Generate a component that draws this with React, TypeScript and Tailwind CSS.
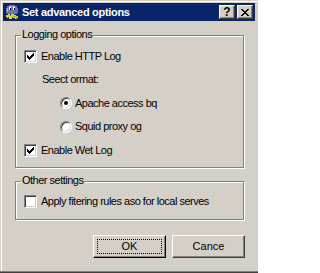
import React from "react"

function CheckMark() {
  return (
    <svg width="7" height="7" viewBox="0 0 7 7" shapeRendering="crispEdges">
      <path
        d="M0 2h1v3H0zM1 3h1v3H1zM2 4h1v3H2zM3 3h1v3H3zM4 2h1v3H4zM5 1h1v3H5zM6 0h1v3H6z"
        fill="#000"
      />
    </svg>
  )
}

function Checkbox({ checked }: { checked?: boolean }) {
  return (
    <span className="flex h-[13px] w-[13px] shrink-0 items-center justify-center border border-t-[#808080] border-l-[#808080] border-r-white border-b-white bg-white shadow-[inset_1px_1px_0_#404040,inset_-1px_-1px_0_#d4d0c8]">
      {checked && <CheckMark />}
    </span>
  )
}

function Radio({ checked }: { checked?: boolean }) {
  return (
    <span className="flex h-[12px] w-[12px] shrink-0 items-center justify-center rounded-full border border-t-[#808080] border-l-[#808080] border-r-white border-b-white bg-white shadow-[inset_1px_1px_0_#404040,inset_-1px_-1px_0_#d4d0c8]">
      {checked && <span className="h-[4px] w-[4px] rounded-full bg-black" />}
    </span>
  )
}

function AppIcon() {
  return (
    <svg width="16" height="16" viewBox="0 0 16 16" shapeRendering="crispEdges">
      {/* body */}
      <path d="M5 1h6v1h2v2h1v5h-1v1H3V9H2V4h1V2h2z" fill="#7070b0" />
      <path d="M5 2h6v1H5zM3 4h1v4H3z" fill="#a8a8e0" />
      {/* eyes */}
      <path d="M5 3h2v3H5zM9 3h2v3H9z" fill="#fff" />
      <path d="M6 4h1v2H6zM10 4h1v2h-1z" fill="#000020" />
      {/* yellow bits */}
      <path d="M4 10h2v1h1v-1h3v1h2v1h2v2h-1v1h-2v-1H8v1H5v-1H3v-1H2v-2h2z" fill="#e0d830" />
      <path d="M6 11h1v1H6zM10 12h1v1h-1zM4 13h1v1H4zM8 13h1v1H8zM12 13h1v1h-1z" fill="#707000" />
    </svg>
  )
}

function CloseGlyph() {
  return (
    <svg width="8" height="7" viewBox="0 0 8 7" shapeRendering="crispEdges">
      <path
        d="M0 0h2v1H0zM6 0h2v1H6zM1 1h2v1H1zM5 1h2v1H5zM2 2h4v1H2zM3 3h2v1H3zM2 4h4v1H2zM1 5h2v1H1zM5 5h2v1H5zM0 6h2v1H0zM6 6h2v1H6z"
        fill="#000"
      />
    </svg>
  )
}

function CaptionButton({ children }: { children: React.ReactNode }) {
  return (
    <span className="flex h-[14px] w-[16px] items-center justify-center border border-t-white border-l-white border-r-[#404040] border-b-[#404040] bg-[#d4d0c8] shadow-[inset_-1px_-1px_0_#808080]">
      {children}
    </span>
  )
}

export default function App() {
  return (
    <div className="flex h-[273px] w-[258px] flex-col bg-[#d4d0c8] font-['Liberation_Sans',Arial,sans-serif] text-[11px] leading-[13px] tracking-[-0.5px] text-black shadow-[inset_0_-1px_0_#404040,inset_0_-2px_0_#808080,inset_1px_1px_0_#d4d0c8,inset_2px_2px_0_#fff]">
      {/* title bar */}
      <div className="mx-[3px] mt-[3px] flex h-[18px] items-center bg-[#0a246a] pl-[1px] pr-[2px]">
        <AppIcon />
        <span className="ml-[2px] font-bold tracking-[-0.3px] text-white">Set advanced options</span>
        <div className="ml-auto flex gap-[2px]">
          <CaptionButton>
            <span className="text-[12px] font-bold leading-none tracking-normal">?</span>
          </CaptionButton>
          <CaptionButton>
            <CloseGlyph />
          </CaptionButton>
        </div>
      </div>

      <div className="flex flex-col pl-[15px] pr-[14px]">
        {/* Logging options */}
        <div className="relative mt-[14px] h-[133px] border border-[#808080] pt-[8px] shadow-[inset_1px_1px_0_#fff,1px_1px_0_#fff]">
          <span className="absolute -top-[8px] left-[5px] bg-[#d4d0c8] px-[1px]">Logging options</span>
          <div className="flex h-[24px] items-center gap-[4px] pl-[8px]">
            <Checkbox checked />
            <span>Enable HTTP Log</span>
          </div>
          <div className="flex h-[23px] items-center pl-[26px]">Seect ormat:</div>
          <div className="flex h-[24px] items-center gap-[3px] pl-[44px]">
            <Radio checked />
            <span>Apache access bq</span>
          </div>
          <div className="flex h-[23px] items-center gap-[3px] pl-[44px]">
            <Radio />
            <span>Squid proxy og</span>
          </div>
          <div className="flex h-[24px] items-center gap-[4px] pl-[8px]">
            <Checkbox checked />
            <span>Enable Wet Log</span>
          </div>
        </div>

        {/* Other settings */}
        <div className="relative mt-[13px] h-[39px] border border-[#808080] pt-[8px] shadow-[inset_1px_1px_0_#fff,1px_1px_0_#fff]">
          <span className="absolute -top-[8px] left-[5px] bg-[#d4d0c8] px-[1px]">Other settings</span>
          <div className="flex h-[23px] items-center gap-[4px] pl-[8px]">
            <Checkbox />
            <span>Apply fitering rules aso for local serves</span>
          </div>
        </div>

        {/* buttons */}
        <div className="mr-[-1px] mt-[15px] flex justify-end gap-[6px]">
          <button className="h-[23px] w-[73px] border border-t-white border-l-white border-r-black border-b-black bg-[#d4d0c8] p-[3px] shadow-[inset_-1px_-1px_0_#808080]">
            <span className="flex h-full w-full items-center justify-center border border-dotted border-black tracking-normal">
              OK
            </span>
          </button>
          <button className="flex h-[23px] w-[73px] items-center justify-center border border-t-white border-l-white border-r-[#404040] border-b-[#404040] bg-[#d4d0c8] tracking-normal shadow-[inset_-1px_-1px_0_#808080]">
            Cance
          </button>
        </div>
      </div>
    </div>
  )
}
